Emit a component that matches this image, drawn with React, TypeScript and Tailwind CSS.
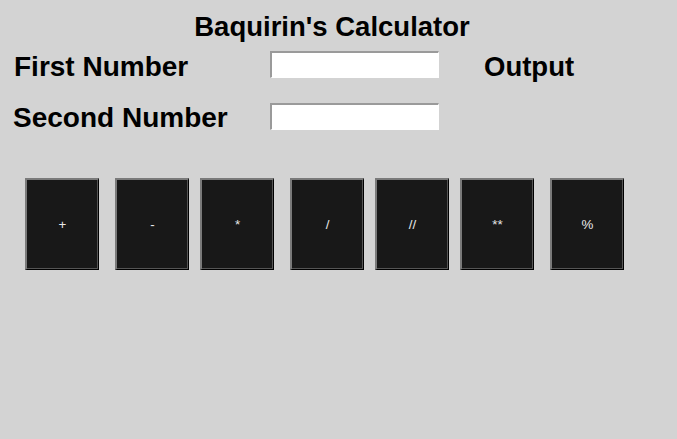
const ops = [
  { label: '+', ml: 'ml-[25px]' },
  { label: '-', ml: 'ml-[16px]' },
  { label: '*', ml: 'ml-[11px]' },
  { label: '/', ml: 'ml-[16px]' },
  { label: '//', ml: 'ml-[11px]' },
  { label: '**', ml: 'ml-[11px]' },
  { label: '%', ml: 'ml-[16px]' },
];

const NumberInput = () => (
  <input
    type="text"
    className="h-[27px] w-[169px] border-t-2 border-l-2 border-r border-b border-t-[#9a9a9a] border-l-[#9a9a9a] border-r-white border-b-white bg-white px-1 text-sm outline-none"
  />
);

export default function App() {
  return (
    <div className="min-h-[439px] w-full bg-[#d3d3d3] font-['Liberation_Sans',Arial,sans-serif] text-black">
      <h1 className="w-[664px] pt-[11px] text-center text-[27.5px] font-bold leading-[32px]">Baquirin&apos;s Calculator</h1>

      <div className="mt-[8px] flex h-[27px] items-center">
        <span className="w-[270px] pl-[14px] pt-[4px] text-[28px] font-bold leading-none">First Number</span>
        <NumberInput />
        <span className="ml-[45px] pt-[4px] text-[27.5px] font-bold leading-none">Output</span>
      </div>

      <div className="mt-[25px] flex h-[27px] items-center">
        <span className="w-[270px] pl-[13px] pt-[2px] text-[28px] font-bold leading-none">Second Number</span>
        <NumberInput />
      </div>

      <div className="mt-[48px] flex">
        {ops.map((op) => (
          <button
            key={op.label}
            className={`${op.ml} flex h-[92px] w-[74px] items-center justify-center border-t-2 border-l-2 border-r border-b border-t-[#7a7a7a] border-l-[#7a7a7a] border-r-black border-b-black bg-[#181818] text-[13.33px] text-[#e8e8e8] shadow-[inset_-1px_-1px_0_#555]`}
          >
            {op.label}
          </button>
        ))}
      </div>
    </div>
  );
}
